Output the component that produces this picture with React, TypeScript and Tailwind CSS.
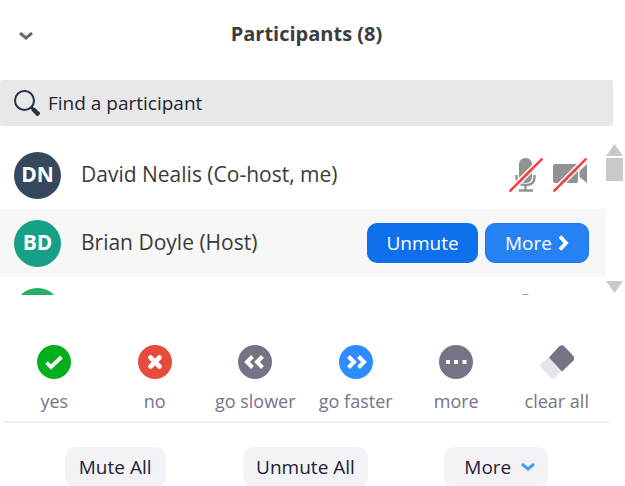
import { useState } from "react"

const reactions = [
  { label: "yes", icon: <YesIcon /> },
  { label: "no", icon: <NoIcon /> },
  { label: "go slower", icon: <SlowerIcon /> },
  { label: "go faster", icon: <FasterIcon /> },
  { label: "more", icon: <DotsIcon /> },
  { label: "clear all", icon: <EraserIcon /> },
]

function YesIcon() {
  return (
    <svg viewBox="0 0 34 34" className="h-[34px] w-[34px]" fill="none" aria-hidden="true">
      <circle cx="17" cy="17" r="17" fill="#04af1e" />
      <path d="M9.5 17.5l4.500 4.500L24.500 12" stroke="#fff" strokeWidth="3.800" />
    </svg>
  )
}

function NoIcon() {
  return (
    <svg viewBox="0 0 34 34" className="h-[34px] w-[34px]" fill="none" aria-hidden="true">
      <circle cx="17" cy="17" r="17" fill="#e64b3c" />
      <path d="M12.500 12.500l9 9M21.500 12.500l-9 9" stroke="#fff" strokeWidth="4.600" strokeLinecap="round" />
    </svg>
  )
}

function SlowerIcon() {
  return (
    <svg viewBox="0 0 34 34" className="h-[34px] w-[34px]" fill="none" aria-hidden="true">
      <circle cx="17" cy="17" r="17" fill="#747487" />
      <path d="M14.500 11.500L9 17l5.500 5.500M24.500 11.500L19 17l5.500 5.500" stroke="#fff" strokeWidth="4" />
    </svg>
  )
}

function FasterIcon() {
  return (
    <svg viewBox="0 0 34 34" className="h-[34px] w-[34px]" fill="none" aria-hidden="true">
      <circle cx="17" cy="17" r="17" fill="#2d8cff" />
      <path d="M9.500 11.500L15 17l-5.500 5.500M19.500 11.500L25 17l-5.500 5.500" stroke="#fff" strokeWidth="4" />
    </svg>
  )
}

function DotsIcon() {
  return (
    <svg viewBox="0 0 34 34" className="h-[34px] w-[34px]" aria-hidden="true">
      <circle cx="17" cy="17" r="17" fill="#747487" />
      <path d="M7 15h4v4H7zM15 15h4v4h-4zM23.500 15h4v4h-4z" fill="#fff" />
    </svg>
  )
}

function EraserIcon() {
  return (
    <svg viewBox="0 0 34 34" className="h-[34px] w-[34px]" aria-hidden="true">
      <path d="M9 12L22 25.500L16 32Q13 35 10 32L1.500 23Q-1 20.500 1.500 18Z" fill="#e4e4ed" />
      <path d="M9 12.500L18.500 2Q21.500-1 24.500 1.500L32.500 10Q35.500 13 33 16L22 26.500Z" fill="#747487" />
    </svg>
  )
}

function MicIcon({ muted = false }: { muted?: boolean }) {
  return (
    <svg viewBox="0 0 34 34" className="h-[34px] w-[34px]" fill="none" aria-label={muted ? "Muted" : "Unmuted"} role="img">
      <rect x="10" width="13" height="25" rx="6" fill="#929292" />
      <path d="M7.500 17v2.500q0 7.500 9 7.500t9-7.500V17M16.500 27v5M10 32.500h14" stroke="#929292" strokeWidth="2.400" />
      {muted && (
        <>
          <path d="M-1 32L32-1M2 35L35 2" stroke="#fff" strokeWidth="1.500" />
          <path d="M0.500 33.500L33.500 0.500" stroke="#ff3c3c" strokeWidth="2.500" />
        </>
      )}
    </svg>
  )
}

function VideoOffIcon() {
  return (
    <svg viewBox="0 0 34 34" className="h-[34px] w-[34px]" fill="none" aria-label="Video off" role="img">
      <rect y="6" width="25" height="19" rx="2" fill="#929292" />
      <path d="M26.500 13L34 6v19l-7.500-6z" fill="#929292" />
      <path d="M-1 32L32-1M2 35L35 2" stroke="#fff" strokeWidth="1.500" />
      <path d="M0.500 33.500L33.500 0.500" stroke="#ff3c3c" strokeWidth="2.500" />
    </svg>
  )
}

function Scrollbar() {
  return (
    <div className="flex w-[17px] shrink-0 flex-col items-center justify-between pt-[3px] pb-0.5">
      <div className="flex flex-col gap-0.5">
        <svg viewBox="0 0 17 12" className="h-3 w-[17px]" aria-hidden="true">
          <path d="M8.500 0L17 12H0z" fill="#c9c9c9" />
        </svg>
        <div className="h-[23px] w-[17px] bg-[#c9c9c9]" />
      </div>
      <svg viewBox="0 0 17 12" className="h-3 w-[17px]" aria-hidden="true">
        <path d="M8.500 12L17 0H0z" fill="#c9c9c9" />
      </svg>
    </div>
  )
}

export default function App() {
  const [query, setQuery] = useState("")

  return (
    <div className="min-h-screen w-full bg-white font-['Open_Sans','Segoe_UI',sans-serif] text-[#232333]">
      {/* Header */}
      <header className="grid h-20 grid-cols-[48px_1fr_48px] items-center pr-3 pb-3">
        <button aria-label="Collapse" className="flex justify-end pt-1 pr-[15px]">
          <svg viewBox="0 0 14 8" className="h-2 w-3.5" fill="none" aria-hidden="true">
            <path d="M1 1l6 5 6-5" stroke="#6b6b6b" strokeWidth="3" />
          </svg>
        </button>
        <h1 className="text-center text-xl font-bold text-[#3c3c3c]">Participants (8)</h1>
      </header>

      {/* Search */}
      <label className="mr-3 flex h-[46px] items-center gap-2 rounded-xs bg-[#e8e8e8] pl-3.5">
        <svg viewBox="0 0 26 26" className="h-[26px] w-[26px] shrink-0" fill="none" aria-hidden="true">
          <circle cx="10.500" cy="10.500" r="9.500" stroke="#26323f" strokeWidth="2" />
          <path d="M17 17l3 3" stroke="#26323f" strokeWidth="3" />
          <path d="M19 19l6 6" stroke="#26323f" strokeWidth="4.500" />
        </svg>
        <input
          type="text"
          aria-label="Find a participant"
          placeholder="Find a participant"
          value={query}
          onChange={(e) => setQuery(e.target.value)}
          className="min-w-0 flex-1 bg-transparent text-[19px] outline-none placeholder:text-[#232333]"
        />
      </label>

      {/* Participant list */}
      <section className="mt-[15px] mr-0.5 flex h-[154px] overflow-hidden">
        <ul className="min-w-0 flex-1 text-[21px] text-[#3a3a3a]">
          <li className="flex h-[68px] items-center pr-[19px] pl-3.5">
            <span className="flex h-[47px] w-[47px] items-center justify-center rounded-full bg-[#34495e] font-bold text-white">
              DN
            </span>
            <span className="ml-5 flex-1">David Nealis (Co-host, me)</span>
            <span className="flex gap-2.5">
              <MicIcon muted />
              <VideoOffIcon />
            </span>
          </li>
          <li className="flex h-[68px] items-center bg-[#f7f7f7] pr-[17px] pl-3.5">
            <span className="flex h-[47px] w-[47px] items-center justify-center rounded-full bg-[#16a085] font-bold text-white">
              BD
            </span>
            <span className="ml-5 flex-1">Brian Doyle (Host)</span>
            <span className="flex gap-[7px] text-[19px] text-white">
              <button className="h-10 w-[111px] rounded-[10px] bg-[#0e71eb]">Unmute</button>
              <button className="flex h-10 w-[104px] items-center justify-center gap-1.5 rounded-[10px] border border-[#1a78ee] bg-[#2681f2]">
                More
                <svg viewBox="0 0 11 16" className="h-4 w-[11px]" fill="none" aria-hidden="true">
                  <path d="M2 1.500L8 8l-6 6.500" stroke="#fff" strokeWidth="3.800" />
                </svg>
              </button>
            </span>
          </li>
          <li className="flex h-[68px] items-center justify-between pr-[63px] pl-3.5">
            <span className="h-[47px] w-[47px] rounded-full bg-[#27ae60]" />
            <MicIcon />
          </li>
        </ul>
        <Scrollbar />
      </section>

      {/* Reactions */}
      <div className="mr-4 ml-1 border-b-2 border-[#ededf4] pt-[50px] pr-0.5 pb-1.5">
        <div className="grid grid-cols-6">
          {reactions.map((item) => (
            <button key={item.label} className="flex flex-col items-center gap-2 text-lg text-[#747487]">
              {item.icon}
              <span className="whitespace-nowrap">{item.label}</span>
            </button>
          ))}
        </div>
      </div>

      {/* Footer */}
      <footer className="grid grid-cols-3 justify-items-center pt-6 pr-[34px] pl-5 text-[19px]">
        <button className="h-10 w-[101px] rounded-[10px] bg-[#f2f2f7]">Mute All</button>
        <button className="h-10 w-[125px] rounded-[10px] bg-[#f2f2f7]">Unmute All</button>
        <button className="flex h-10 w-[104px] items-center justify-center gap-2.5 rounded-[10px] bg-[#f2f2f7] pl-2">
          More
          <svg viewBox="0 0 14 8" className="h-2 w-3.5" fill="none" aria-hidden="true">
            <path d="M1 1l6 5 6-5" stroke="#4f9be8" strokeWidth="3" />
          </svg>
        </button>
      </footer>
    </div>
  )
}
